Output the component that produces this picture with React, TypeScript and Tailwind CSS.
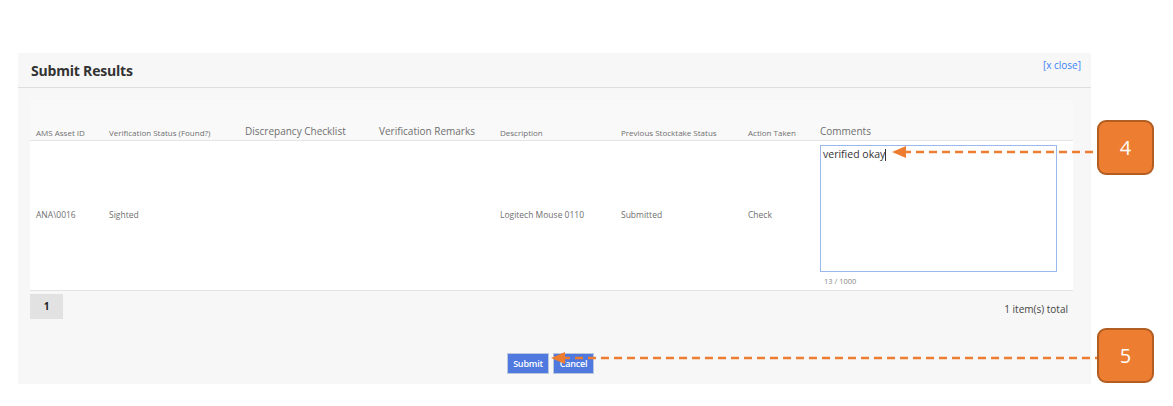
import React from "react";

const cols = [
  { title: "AMS Asset ID", w: "w-[73px]", big: false, value: "ANA\\0016" },
  { title: "Verification Status (Found?)", w: "w-[136px]", big: false, value: "Sighted" },
  { title: "Discrepancy Checklist", w: "w-[134px]", big: true, value: "" },
  { title: "Verification Remarks", w: "w-[121px]", big: true, value: "" },
  { title: "Description", w: "w-[121px]", big: false, value: "Logitech Mouse 0110" },
  { title: "Previous Stocktake Status", w: "w-[127px]", big: false, value: "Submitted" },
  { title: "Action Taken", w: "w-[72px]", big: false, value: "Check" },
];

const Callout = ({ n, className }: { n: string; className: string }) => (
  <div
    className={
      "absolute w-[57px] h-[55px] rounded-[9px] bg-[#ed7d31] border-2 border-[#b25d22] flex items-center justify-center text-white text-[20px] " +
      className
    }
  >
    {n}
  </div>
);

export default function App() {
  return (
    <div
      className="relative w-[1173px] h-[406px] bg-white overflow-hidden"
      style={{ fontFamily: '"Open Sans", "Noto Sans", sans-serif' }}
    >
      <div className="ml-[18px] pt-[53px] w-[1073px]">
        <div className="bg-[#f7f7f7] h-[331px] flex flex-col">
          {/* header */}
          <div className="h-[35px] flex items-start justify-between border-b border-[#dedede] pl-[13px] pr-[10px]">
            <h2 className="text-[14px] font-bold text-[#333] pt-[7px] tracking-[-0.2px]">Submit Results</h2>
            <a className="text-[10px] text-[#3b82f6] pt-[5px]">[x close]</a>
          </div>

          {/* table */}
          <div className="mx-[12px] mt-[12px] w-[1043px]">
            <div className="h-[41px] bg-[#f9f9f9] flex items-end border-b border-[#e6e6e6]">
              {cols.map((c) => (
                <div
                  key={c.title}
                  className={
                    c.w +
                    " pl-[6px] pb-[1px] whitespace-nowrap text-[#6f6f6f] " +
                    (c.big ? "text-[10px]" : "text-[8px]")
                  }
                >
                  {c.title}
                </div>
              ))}
              <div className="flex-1 pl-[6px] pb-[1px] text-[10px] text-[#6f6f6f]">Comments</div>
            </div>
            <div className="h-[150px] bg-white flex items-stretch border-b border-[#e3e3e3]">
              {cols.map((c) => (
                <div
                  key={c.title}
                  className={c.w + " pl-[6px] flex items-center text-[8.5px] text-[#6f6f6f] whitespace-nowrap"}
                >
                  {c.value}
                </div>
              ))}
              <div className="flex-1 pl-[6px] pt-[4px]">
                <div className="w-[237px] h-[127px] border border-[#9bb8ec] bg-white px-[2px] pt-[1px] text-[10.5px] text-[#333]">
                  verified okay<span className="inline-block w-px h-[12px] bg-[#333] align-middle" />
                </div>
                <div className="pl-[4px] pt-[4px] text-[7.5px] text-[#888]">13 / 1000</div>
              </div>
            </div>
            <div className="flex items-start justify-between pt-[3px]">
              <div className="w-[33px] h-[25px] bg-[#e2e2e2] flex items-center justify-center text-[10px] font-bold text-[#222]">
                1
              </div>
              <div className="text-[10px] text-[#444] pt-[8px] pr-[5px]">1 item(s) total</div>
            </div>
          </div>

          {/* buttons */}
          <div className="flex justify-center gap-[4px] mt-[34px] pr-[8px]">
            <button className="w-[42px] h-[21px] bg-[#5079e0] border border-[#bcc7dc] text-white text-[9px] font-semibold tracking-[-0.2px]">
              Submit
            </button>
            <button className="w-[41px] h-[21px] bg-[#5079e0] border border-[#bcc7dc] text-white text-[9px] font-semibold tracking-[-0.2px]">
              Cancel
            </button>
          </div>
        </div>
      </div>

      {/* annotations */}
      <svg className="absolute left-0 top-0" width="1173" height="406">
        <line x1="903" y1="152" x2="1097" y2="152" stroke="#ed7d31" strokeWidth="2.5" strokeDasharray="8 5" />
        <polygon points="892,152 906,146 906,158" fill="#ed7d31" />
        <line x1="562" y1="358" x2="1097" y2="358" stroke="#ed7d31" strokeWidth="2.5" strokeDasharray="8 5" />
        <polygon points="551,358 565,352 565,364" fill="#ed7d31" />
      </svg>
      <Callout n="4" className="left-[1097px] top-[120px]" />
      <Callout n="5" className="left-[1097px] top-[328px]" />
    </div>
  );
}
